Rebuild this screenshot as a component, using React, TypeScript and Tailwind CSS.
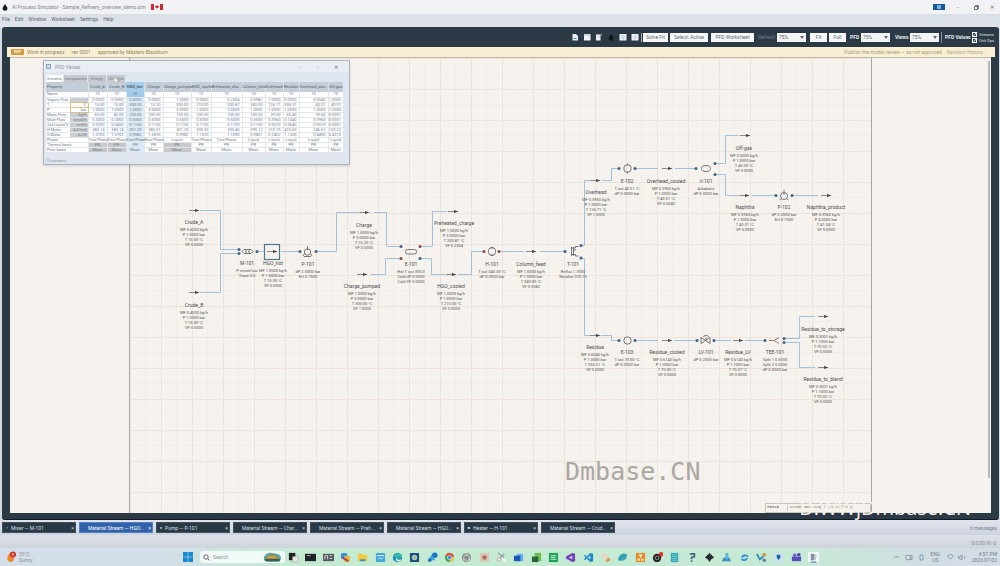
import React from "react";

const ORIGIN_X = 130;
const ORIGIN_Y = 58;

type NodeInfo = { name: string; x: number; y: number; lines: string[] };

const nodes: NodeInfo[] = [
  { name: "Crude_A", x: 194, y: 222, lines: ["MF 0.6000 kg/h", "P 1.0000 bar", "T 15.00 °C", "VF 0.0000"] },
  { name: "Crude_B", x: 194, y: 305, lines: ["MF 0.4000 kg/h", "P 1.0000 bar", "T 15.00 °C", "VF 0.0000"] },
  { name: "M-101", x: 247, y: 263, lines: ["P mixed low", "Trace 0.0"] },
  { name: "HGO_hot", x: 273, y: 263, lines: ["MF 1.0000 kg/h", "P 1.0000 bar", "T 15.00 °C", "VF 0.0000"] },
  { name: "P-101", x: 308, y: 264, lines: ["dP 2.0000 bar", "Eff 0.7500"] },
  { name: "Charge", x: 364, y: 225, lines: ["MF 1.0000 kg/h", "P 3.0000 bar", "T 15.20 °C", "VF 0.0000"] },
  { name: "Charge_pumped", x: 362, y: 286, lines: ["MF 1.0000 kg/h", "P 3.0000 bar", "T 300.00 °C", "VF 1.0000"] },
  { name: "E-101", x: 411, y: 264, lines: ["Hot T out 300.0", "Cold dP 0.0000", "Cold VF 0.0000"] },
  { name: "Preheated_charge", x: 454, y: 223, lines: ["MF 1.0000 kg/h", "P 3.0000 bar", "T 200.87 °C", "VF 0.2304"] },
  { name: "HGO_cooled", x: 451, y: 286, lines: ["MF 1.0000 kg/h", "P 1.0000 bar", "T 210.00 °C", "VF 0.0000"] },
  { name: "H-101", x: 492, y: 264, lines: ["T out 340.00 °C", "dP 0.0000 bar"] },
  { name: "Column_feed", x: 531, y: 264, lines: ["MF 1.0000 kg/h", "P 1.0000 bar", "T 340.00 °C", "VF 0.5982"] },
  { name: "T-101", x: 573, y: 264, lines: ["Reflux 1.7000", "Residue 370.75"] },
  { name: "Overhead", x: 596, y: 192, lines: ["MF 0.3960 kg/h", "P 1.0000 bar", "T 126.71 °C", "VF 1.0000"] },
  { name: "E-102", x: 627, y: 181, lines: ["T out 40.01 °C", "dP 0.0000 bar"] },
  { name: "Overhead_cooled", x: 666, y: 181, lines: ["MF 0.3960 kg/h", "P 1.0000 bar", "T 40.01 °C", "VF 0.0040"] },
  { name: "V-101", x: 706, y: 181, lines: ["Adiabatic", "dP 0.0000 bar"] },
  { name: "Off-gas", x: 744, y: 148, lines: ["MF 0.0000 kg/h", "P 1.0000 bar", "T 40.00 °C", "VF 0.0000"] },
  { name: "Naphtha", x: 745, y: 207, lines: ["MF 0.3960 kg/h", "P 1.0000 bar", "T 40.01 °C", "VF 0.0000"] },
  { name: "P-102", x: 784, y: 207, lines: ["dP 3.0000 bar", "Eff 0.7500"] },
  { name: "Naphtha_product", x: 826, y: 207, lines: ["MF 0.3960 kg/h", "P 4.0000 bar", "T 41.04 °C", "VF 0.0000"] },
  { name: "Residue", x: 595, y: 347, lines: ["MF 0.6040 kg/h", "P 1.0000 bar", "T 355.31 °C", "VF 0.0000"] },
  { name: "E-103", x: 627, y: 352, lines: ["T out 70.00 °C", "dP 0.0000 bar"] },
  { name: "Residue_cooled", x: 667, y: 352, lines: ["MF 0.6140 kg/h", "P 1.0000 bar", "T 70.00 °C", "VF 0.0000"] },
  { name: "LV-101", x: 706, y: 352, lines: ["dP 0.2000 bar"] },
  { name: "Residue_LV", x: 738, y: 352, lines: ["MF 0.6140 kg/h", "P 1.1000 bar", "T 70.07 °C", "VF 0.0000"] },
  { name: "TEE-101", x: 775, y: 352, lines: ["Split 1 0.5000", "Split 2 0.5000", "dP 0.0000 bar"] },
  { name: "Residue_to_storage", x: 823, y: 329, lines: ["MF 0.3001 kg/h", "P 1.1000 bar", "T 70.02 °C", "VF 0.0000"] },
  { name: "Residue_to_blend", x: 823, y: 379, lines: ["MF 0.3001 kg/h", "P 1.1000 bar", "T 70.02 °C", "VF 0.0000"] },
];

const wires = [
  "M200 210.5H220.5V249.5H239", "M200 292.5H220.500V253.5H239", "M257 251.5H264", "M281 251.5H299", "M316 251.5H336.5V212.5H358",
  "M374 212.5H386.5V246.5H401", "M420 246.5H432.5V211.5H447", "M371 274.5H385.5V258.5H401", "M420 258.5H431.5V274.5H445", "M458 274.5H471.5V251.5H484",
  "M499 251.5H524", "M540 251.5H565", "M581 245.5H584.5V180.5H590", "M602 180.5H611.5V168.5H619", "M635 168.5H658",
  "M675 168.5H696", "M715 163.5H725.5V135.5H739", "M715 174.5H725.5V195.5H738", "M752 195.5H775", "M792 195.5H818",
  "M581 258.5H584.5V335.5H590", "M601 335.5H611.5V340.5H619", "M635 340.5H658", "M674 340.5H697", "M714 340.5H731",
  "M745 340.5H765", "M784 338.5H799.5V316.5H815", "M784 342.5H799.500V367.5H815",
];

const arrows: [number, number][] = [
  [189, 210.5], [189, 292.5], [267, 251.5], [359, 212.5], [357, 274.5], [448, 211.5], [446, 274.5], [526, 251.5], [590, 180.5],
  [662, 168.5], [740, 135.5], [739, 195.5], [821, 195.5], [590, 335.5], [662, 340.5], [733, 340.5], [818, 316.5], [818, 367.5],
];

const bluePorts: [number, number][] = [
  [239, 249.5], [239, 253.5], [257, 251.5], [300, 251.5], [316, 251.5], [401, 246.5], [420, 258.5], [565, 251.5], [581, 245.5], [581, 258],
  [619, 168.5], [635, 168.5], [696, 168.5], [715, 163.5], [715, 174.5], [776, 195.5], [792, 195.5], [619, 340.5], [635, 340.5],
  [697, 340.5], [714, 340.5], [765, 340.5], [784, 338.5], [784, 342.5],
];
const redPorts: [number, number][] = [[420, 246.5], [401, 258.5], [484, 251.5], [499, 251.5]];

function Flowsheet() {
  return (
    <svg className="absolute left-0 top-0" width="741" height="455" viewBox="130 58 741 455" fill="none" aria-hidden="true">
      <g stroke="#9fc3df" strokeWidth="1">
        {wires.map((d) => <path key={d} d={d} />)}
      </g>
      {arrows.map(([x, y]) => (
        <g key={`${x}-${y}`}>
          <path d={`M${x} ${y}h8`} stroke="#8a8a88" strokeWidth="1" />
          <path d={`M${x + 6} ${y - 1.5}l4.500 1.500l-4.500 1.500z`} fill="#444" />
        </g>
      ))}
      <rect x="264.500" y="244.500" width="15" height="15" stroke="#4d7896" strokeWidth="1.200" />
      <g stroke="#66696c" strokeWidth="0.900">
        <path d="M244 249.500h7l2 2l-2 2h-7l-2-2zM246 249.500v4M249 249.500v4" />
        <circle cx="307.500" cy="252" r="3.200" /><path d="M307.500 246v4M304 256.500h7M304.500 253.500l-1.500 2.500M310.500 253.500l1.500 2.500" />
        <rect x="405.500" y="249.500" width="11" height="4.500" rx="2" />
        <rect x="488.500" y="248" width="7" height="7" rx="2.500" /><path d="M490.500 247.500h3M490.500 255.500h3" />
        <path d="M571.500 247v9M573.500 247v9M571.500 248h4v-1.500h3M571.500 254.500h4v1.500h3M574 250h2" />
        <rect x="624" y="165" width="7" height="7" rx="2.500" /><path d="M627.500 163.500v2M627.500 171.500v2" />
        <ellipse cx="706" cy="168.500" rx="4.500" ry="3" />
        <circle cx="784" cy="196" r="3.500" /><path d="M784 190v5M781 199l-1.500 1M787 199l1.500 1" />
        <circle cx="627.500" cy="340.500" r="3.700" />
        <path d="M701 337.500l9 6v-6l-9 6zM706 340.500v-3M703.500 337c0-2 5-2 5 0" />
        <path d="M774 340.500l5-3" />
      </g>
      <path d="M769 340.500h5l5 3" stroke="#b06a5c" strokeWidth="0.900" />
      {bluePorts.map(([x, y]) => <circle key={`b${x}-${y}`} cx={x} cy={y} r="1.500" fill="#3f6588" />)}
      {redPorts.map(([x, y]) => <circle key={`r${x}-${y}`} cx={x} cy={y} r="1.500" fill="#8c4a48" />)}
    </svg>
  );
}

const columns = ["Crude_A", "Crude_B", "HGO_hot", "Charge", "Charge_pumped", "HGO_cooled", "Preheated_cha...", "Column_feed", "Overhead", "Residue", "Overhead_coo...", "Off-gas"];

const rows: { label: string; unit?: string; values: string[] }[] = [
  { label: "Name", values: ["10", "10", "10", "10", "10", "10", "10", "10", "10", "10", "10", "10"] },
  { label: "Vapour Frac.", unit: "-", values: ["0.0000", "0.0000", "0.0000", "0.0000", "1.0000", "0.0000", "0.2304", "0.5982", "1.0000", "0.0000", "0.0040", "1.0000"] },
  { label: "T", unit: "°C", values: ["15.00", "15.00", "300.00", "15.20", "300.00", "210.00", "200.87", "340.00", "126.71", "355.31", "40.01", "40.01"] },
  { label: "P", unit: "bar", values: ["1.0000", "1.0000", "1.0000", "3.0000", "3.0000", "1.0000", "3.0000", "1.0000", "1.0000", "1.0000", "1.0000", "1.0000"] },
  { label: "Mass Flow", unit: "kg/h", values: ["60.00", "40.00", "100.00", "100.00", "100.00", "100.00", "100.00", "100.00", "39.60", "60.40", "39.60", "0.0001"] },
  { label: "Mole Flow", unit: "kmol/h", values: ["0.3000", "0.2000", "0.5000", "0.5000", "0.5000", "0.5000", "0.5000", "0.5000", "0.3960", "0.1040", "0.3960", "0.0001"] },
  { label: "Std Liquid V.", unit: "m3/h", values: ["0.0700", "0.0450", "0.1150", "0.1150", "0.1150", "0.1150", "0.1150", "0.1150", "0.0510", "0.0640", "0.0510", "0.0001"] },
  { label: "H Molar", unit: "kJ/mol", values: ["383.14", "383.14", "301.20", "383.01", "301.20", "330.50", "333.40", "290.12", "210.10", "410.60", "246.61", "120.22"] },
  { label: "S Molar", unit: "kJ/K", values: ["1.3703", "1.3703", "0.9982", "1.3690", "0.9982", "1.1020", "1.1090", "0.9801", "0.7402", "1.1250", "0.8490", "0.4310"] },
  { label: "Phase", values: ["Two-Phase", "Two-Phase", "Two-Phase", "Two-Phase", "Liquid", "Two-Phase", "Two-Phase", "Liquid", "Liquid", "Liquid", "Liquid", "Liquid"] },
  { label: "Thermo basis", values: ["PR", "PR", "PR", "PR", "PR", "PR", "PR", "PR", "PR", "PR", "PR", "PR"] },
  { label: "Flow basis", values: ["Mass", "Mass", "Mass", "Mass", "Mass", "Mass", "Mass", "Mass", "Mass", "Mass", "Mass", "Mass"] },
];

function ValuesWindow() {
  return (
    <section aria-label="PFD Values" className="absolute left-[33px] top-[2px] flex w-[307px] flex-col border border-[#aab3bf] bg-[#dfe6ef] text-[#737b85] shadow-sm">
      <header className="flex h-[11px] items-center bg-[#e9edf4] pl-[2px] pr-1 text-[5px] leading-[6px] text-[#8d95a1]">
        <span className="mr-1 h-[5px] w-[5px] border border-[#8ba4bd] bg-[#c9dbea]" />
        <span className="flex-1">PFD Values</span>
        <button aria-label="Minimize" className="w-[18px]">–</button>
        <button aria-label="Maximize" className="w-[18px]">▫</button>
        <button aria-label="Close" className="w-[18px] text-[#555]">✕</button>
      </header>
      <nav className="mt-px flex h-[9px] gap-px pl-[2px] pt-[2px] text-[4px] leading-[6px]">
        <button className="w-[17px] bg-white">Streams</button>
        <button className="w-[23px] bg-[#c6c9ce]">Composition</button>
        <button className="w-[18px] bg-[#c6c9ce]">Energy</button>
        <button className="relative w-[18px] bg-[#c6c9ce]">Unit Ops
          <svg className="absolute left-[7px] top-[2px]" width="5" height="7" viewBox="0 0 5 7" aria-hidden="true"><path d="M0 0v6l1.500-1.500L3 7l1-.6L3 4h2z" fill="#fff" stroke="#777" strokeWidth=".4" /></svg>
        </button>
      </nav>
      <table className="ml-[2px] w-[297px] table-fixed border-collapse text-[4px] leading-[4px]">
        <colgroup>
          <col className="w-[24px]" /><col className="w-[18px]" /><col className="w-[19px]" /><col className="w-[19px]" /><col className="w-[18px]" />
          <col className="w-[19px]" /><col className="w-[28px]" /><col className="w-[20px]" /><col className="w-[31px]" /><col className="w-[23px]" />
          <col className="w-[18px]" /><col className="w-[16px]" /><col className="w-[29px]" /><col className="w-[15px]" />
        </colgroup>
        <thead>
          <tr className="h-[10px] bg-[#c3ced9] text-[#56606a]">
            <th colSpan={2} className="p-0 pl-px text-left font-normal">Property</th>
            {columns.map((c) => (
              <th key={c} className={c === "HGO_hot" ? "whitespace-nowrap bg-[#a5cdec] p-0 text-center font-bold" : "whitespace-nowrap border-l border-[#d7dee6] p-0 text-center font-normal"}>{c}</th>
            ))}
          </tr>
        </thead>
        <tbody>
          {rows.map((r, i) => (
            <tr key={r.label} className="h-[5px] border-b border-[#e3e7eb] bg-white">
              <th scope="row" colSpan={r.unit ? 1 : 2} className="whitespace-nowrap p-0 pl-px text-left font-normal">{r.label}</th>
              {r.unit && (
                <td className={i === 2 || i === 3 ? "border border-[#e2be82] p-0" : "bg-[#c9ccd1] p-0"}>
                  <select aria-label={`${r.label} unit`} className="block h-[4px] w-full appearance-none bg-transparent pr-px text-right text-[4px] leading-[4px]">
                    <option>{r.unit}</option>
                  </select>
                </td>
              )}
              {r.values.map((v, j) => {
                const gray = i >= 10 && (j < 2 || j === 4);
                const align = i >= 9 || i === 0 ? "text-center" : "pr-[2px] text-right";
                const fill = j === 2 ? (i === 0 ? "bg-[#9fc8ea]" : "bg-[#d9ebf8]") : gray ? "bg-[#c6c8cc]" : "";
                const ink = i > 1 && i < 9 && (j < 2 || j === 6) ? "text-[#6477ad]" : "";
                return <td key={j} className={`whitespace-nowrap border-l border-[#e3e7eb] p-0 ${align} ${fill} ${ink}`}>{v}</td>;
              })}
            </tr>
          ))}
        </tbody>
      </table>
      <footer className="mt-[5px] pl-[2px] text-[4px] leading-[6px] text-[#8a93a0]">15 streams</footer>
    </section>
  );
}

function DarkSelect({ label, value }: { label: string; value: string }) {
  return (
    <span className="relative flex">
      <select aria-label={label} className="h-[9px] w-[29px] appearance-none bg-[#f3f4f6] pl-[2px] text-[5px] leading-[7px] text-[#666]">
        <option>{value}</option>
      </select>
      <svg className="pointer-events-none absolute right-[2px] top-[3px]" width="4" height="3" viewBox="0 0 4 3" aria-hidden="true"><path d="M0 0h4L2 3z" fill="#666" /></svg>
    </span>
  );
}

function ToolIcon({ kind }: { kind: string }) {
  return (
    <svg width="8" height="8" viewBox="0 0 8 8" aria-hidden="true">
      {kind === "new" && <path d="M1.500 1h3.500l2 2V7.500H1.500z" fill="#e8edf2" />}
      {kind === "new" && <path d="M2.500 5.500h3" stroke="#5a88b5" />}
      {kind === "open" && <path d="M1 1h6.500v6.500H1z" fill="#f0f3f6" />}
      {kind === "open" && <path d="M1 2h6" stroke="#9fb8cf" />}
      {kind === "edit" && <path d="M1 1.500h4.500v6H1z" fill="#eef1f5" />}
      {kind === "edit" && <path d="M3.500 4.500L7 1" stroke="#b5c1ce" />}
      {kind === "drop" && <path d="M4 .5C5 3 6.500 4 6.500 5.500a2.500 2.300 0 01-5 0C1.500 4 3 3 4 .5z" fill="#10161b" />}
      {kind === "grid" && <path d="M.5 1h7v6.500h-7z" fill="#f0f3f8" />}
      {kind === "grid" && <path d="M.5 3h7M4 3v4.500M2 5h4" stroke="#b3c4da" strokeWidth=".6" />}
    </svg>
  );
}

const tabs: [string, string][] = [
  ["▫", "Mixer — M-101"], ["", "Material Stream — HGO..."], ["●", "Pump — P-101"], ["", "Material Stream — Char..."],
  ["", "Material Stream — Preh..."], ["", "Material Stream — HGO..."], ["■", "Heater — H-101"], ["", "Material Stream — Crud..."],
];

const appIcons: { name: string; art: React.ReactNode }[] = [
  { name: "Task view", art: <><path d="M1 1h7v8H1z" fill="#222" /><path d="M5 5h6v6H5z" fill="#e7e7e7" stroke="#999" strokeWidth=".5" /></> },
  { name: "Terminal", art: <><path d="M0 2h12v8H0z" fill="#20242a" /><path d="M2 4h4" stroke="#bbb" /></> },
  { name: "Command prompt", art: <><path d="M0 2h12v8H0z" fill="#555b60" /><path d="M2 8V4h3v4M7 4h3M7 7h3" stroke="#ddd" fill="none" /></> },
  { name: "Paint", art: <><rect x="1" y="1" width="7" height="7" rx="2" fill="#368de0" /><rect x="4" y="4" width="7" height="7" rx="2" fill="#e7b73a" /><path d="M3 6l6 4" stroke="#a13c68" strokeWidth="2" /></> },
  { name: "Files", art: <><path d="M1 2h4l1 1h5v7H1z" fill="#f3c63b" /><path d="M3 8h6v2H3z" fill="#318dd5" /></> },
  { name: "Store", art: <><rect x="1" y="1" width="10" height="10" rx="1" fill="#43a5d8" /><path d="M2 4h8M3 8c3-4 4 2 6-2" stroke="#dff3ff" fill="none" /></> },
  { name: "Edge", art: <><circle cx="6" cy="6" r="5" fill="#1686cf" /><path d="M1 5c1-5 10-4 10 1H5c0 3 3 3 5 2" fill="#38bd9e" /><path d="M5 6c0 3 3 3 5 2l-1 2c-4 1-6-1-4-4z" fill="#d5f1f2" /></> },
  { name: "Photos", art: <><rect x="1" y="1" width="10" height="10" rx="1" fill="#204d77" /><circle cx="6" cy="6" r="3" fill="#8ed0e8" /><circle cx="6" cy="6" r="1.500" fill="#e0a747" /></> },
  { name: "Cloud", art: <><circle cx="8.500" cy="3.500" r="3" fill="#1672c2" /><path d="M1 9l4-6 4 6z" fill="#3b9ee8" /><circle cx="3" cy="9" r="2" fill="#2475c4" /></> },
  { name: "Chrome", art: <><circle cx="6" cy="6" r="5" fill="#e9bd32" /><path d="M6 6L1.700 3.500A5 5 0 0111 5z" fill="#dc4b3e" /><path d="M6 6L1.700 3.500A5 5 0 006 11z" fill="#37a75c" /><circle cx="6" cy="6" r="2.300" fill="#3f83dd" stroke="#fff" strokeWidth=".6" /></> },
  { name: "Assistant", art: <><circle cx="6" cy="6" r="5" fill="#858b88" /><path d="M4 2l5 3v4M8 2L3 5v4M3 8l5 2 2-4" stroke="#dfe8e2" strokeWidth=".8" fill="none" /></> },
  { name: "Record", art: <><rect x="1" y="1" width="10" height="10" rx="1" fill="#d7c9b9" /><circle cx="6" cy="6" r="2.500" fill="#b76c5b" /></> },
  { name: "Snip", art: <><path d="M2 1l7 5M9 2L4 7" stroke="#9b8fa2" strokeWidth="1.200" /><circle cx="3" cy="8" r="2" fill="#eee" stroke="#c1a2a2" /><circle cx="9" cy="9" r="2" fill="#f1f1f1" /></> },
  { name: "Word", art: <><path d="M4 2h7v8H4z" fill="#66aaf0" /><path d="M1 4h7v6H1z" fill="#1a57b5" /></> },
  { name: "Excel", art: <><path d="M4 1h7v9H4z" fill="#6fbd52" /><path d="M1 5h7v6H1z" fill="#276838" /></> },
  { name: "Sheets", art: <><path d="M1 1h10v10H1z" fill="#21a25a" /><path d="M3 4h6M3 6h5M3 8h6" stroke="#d1f4dd" /></> },
  { name: "Visual Studio", art: <><path d="M8 1l3 1v8l-3 1-7-4V5z" fill="#7244b7" /><path d="M8 4L4 6l4 2z" fill="#d9c8f0" /></> },
  { name: "VS Code", art: <><path d="M8 1l3 1v8l-3 1-4-4-2 2-1-1 2-2-2-2 1-1 2 2z" fill="#1e88ce" /><path d="M8 4L5 6l3 2z" fill="#d4edf5" /></> },
  { name: "Draw", art: <><path d="M1 3l4-2 5 5-4 3z" fill="#e8d5bb" /><path d="M6 9l4-3 1 3-3 2z" fill="#d68e43" /></> },
  { name: "Browser", art: <><path d="M1 9C2 2 7 0 11 3c0 5-4 8-10 6z" fill="#3ca8b7" /><path d="M3 9c1-3 3-5 6-6" stroke="#23779a" fill="none" /></> },
  { name: "Diagrams", art: <><path d="M1 1h10v10H1z" fill="#e88a25" /><path d="M6 4v2M3.500 8.500L6 6l2.500 2.500" stroke="#fff0d8" fill="none" /><path d="M4.500 2.500h3v2h-3zM2.500 7.500h2.500v2H2.500zM7 7.500h2.500v2H7z" fill="#fff0d8" /></> },
  { name: "Recorder", art: <><circle cx="5.500" cy="6.500" r="4.500" fill="#232323" /><circle cx="5.500" cy="6.500" r="2" stroke="#999" fill="none" /><circle cx="10" cy="2.500" r="2.500" fill="#e0322e" /></> },
  { name: "Notes", art: <><path d="M2 1h8v10H2z" fill="#2ba4b4" /><path d="M3 3h6M3 5h6M3 7h6M3 9h6" stroke="#b8edef" strokeWidth=".6" /></> },
  { name: "Python", art: <><path d="M3 2h5v3L5 6v2" stroke="#4b6580" strokeWidth="2" fill="none" /><circle cx="5" cy="10" r="1" fill="#4b6580" /></> },
  { name: "Inkscape", art: <path d="M6 1l5 5-3 2-2 3-2-3-3-2z" fill="#25282c" /> },
  { name: "Azure", art: <><path d="M1 10h10L9 6H3z" fill="#348dbb" /><path d="M5 1h3v7H5z" fill="#5fb5d9" /></> },
  { name: "Sync", art: <><circle cx="6" cy="6" r="4" fill="#a9d6e8" /><path d="M3 6c2-4 6-2 7-1M9 7c-2 3-5 2-6 1" stroke="#1b7fc0" strokeWidth="1.500" fill="none" /></> },
  { name: "Tools", art: <><path d="M1 2l3 6 4-3" stroke="#2e8eb5" strokeWidth="2" fill="none" /><circle cx="9" cy="3" r="2" fill="#dc8c38" /><circle cx="9" cy="9" r="2" fill="#6380a0" /></> },
  { name: "Installer", art: <><path d="M1 1h10v10H1z" fill="#cce3ec" /><path d="M4 3h4v3L6 9 4 6z" fill="#1b66ad" /></> },
  { name: "Teams", art: <><path d="M1 5h10v5H1z" fill="#574dbb" /><circle cx="4" cy="3.500" r="2" fill="#6f66cf" /><circle cx="8.500" cy="3" r="2" fill="#5148ae" /></> },
  { name: "Simulator", art: <><path d="M0 0h12v11H0z" fill="#f4f7f9" /><path d="M3 2h4v7H3z" fill="#82939d" /><path d="M7 3l2 1-1 4" stroke="#82939d" strokeWidth=".8" fill="none" /><path d="M3 11h6" stroke="#315fa8" /></> },
];

export default function App() {
  return (
    <div className="flex min-h-screen w-full flex-col bg-[#d5dbe5] font-[Roboto,sans-serif] text-[5px] leading-[6px] text-[#5d656e]">
      <header className="flex h-[14px] items-center bg-[#f1f1f6] pl-[2px] pr-1 text-[#83868d]">
        <svg width="6" height="8" viewBox="0 0 6 8" aria-hidden="true"><path d="M3 1c1 2 2.500 3 2.500 4.500a2.500 2.300 0 01-5 0C.5 4 2 3 3 1z" fill="#15191d" /></svg>
        <h1 className="ml-1 min-w-[126px] whitespace-nowrap font-normal">AI Process Simulator - Sample_Refinery_overview_demo.sim</h1>
        <svg className="ml-[5px] shrink-0" width="12" height="6" viewBox="0 0 12 6" aria-label="Canada"><path d="M0 0h12v6H0z" fill="#fff" /><path d="M0 0h3v6H0zM9 0h3v6H9zM6 1l1 1 1-.2-.5 1.700L6 4.500l-1.500-1L4 1.800 5 2z" fill="#d5242c" /></svg>
        <span className="flex-1" />
        <span className="mr-[7px] flex h-[6px] w-[12px] items-center justify-center bg-[#17569a]"><span className="h-[4px] w-[4px] bg-[#82b3d7]" /></span>
        <button aria-label="Minimize" className="w-[12px]">–</button>
        <button aria-label="Restore" className="ml-[6px] flex w-[12px] justify-center"><svg width="5" height="5" viewBox="0 0 5 5" fill="none" stroke="#555" strokeWidth=".8" aria-hidden="true"><path d="M.5 1.500h3v3h-3zM1.500 1.500v-1h3v3h-1" /></svg></button>
        <button aria-label="Close" className="ml-[6px] w-[8px] text-[#555]">✕</button>
      </header>

      <nav className="flex h-[13px] items-center gap-[5px] bg-gradient-to-b from-[#d9e0e7] to-[#e0e4eb] pb-[3px] pl-[2px]">
        <button>File</button><button>Edit</button><button>Window</button><button>Worksheet</button><button>Settings</button><button>Help</button>
      </nav>

      <main className="ml-[2px] mr-px flex flex-1 flex-col rounded-[3px] border-b border-[#101a22] bg-[#2c3a46] pb-[6px]">
        <div className="flex h-5 items-center justify-end pr-[5px] text-[#646b73]">
          <div className="flex items-center gap-1">
            {["new", "open", "edit", "drop", "grid", "grid"].map((k, i) => (
              <button key={i} aria-label={`${k} ${i + 1}`}><ToolIcon kind={k} /></button>
            ))}
          </div>
          <span className="ml-[2px] mr-px h-[9px] w-px bg-[#a8b0b8]" />
          <button className="h-[9px] w-[25px] whitespace-nowrap bg-[#f7f8fa]">Solve Fit</button>
          <button className="ml-[2px] h-[9px] w-[38px] whitespace-nowrap bg-[#f7f8fa]">Select: Active</button>
          <button className="ml-[3px] h-[9px] w-[43px] whitespace-nowrap bg-[#f7f8fa]">PFD Worksheet</button>
          <span className="ml-1 w-[19px] text-[#6d7b88]">Refresh</span>
          <DarkSelect label="Refresh" value="75%" />
          <button className="ml-1 h-[9px] w-[17px] bg-[#f7f8fa]">Fit</button>
          <button className="ml-[2px] h-[9px] w-[17px] bg-[#f7f8fa]">Full</button>
          <span className="ml-1 w-[11px] font-bold text-[#e8ecef]">PFD</span>
          <DarkSelect label="PFD zoom" value="75%" />
          <span className="ml-[5px] w-[15px] font-bold text-[#e8ecef]">Views</span>
          <DarkSelect label="Views zoom" value="75%" />
          <span className="ml-[2px] mr-[3px] h-[11px] w-px bg-[#8995a0]" />
          <span className="w-[27px] whitespace-nowrap font-bold text-[#e8ecef]">PFD Values</span>
          <div className="flex w-[22px] flex-col gap-px text-[4px] leading-[5px] text-[#dfe4e8]">
            {["Streams", "Unit Ops"].map((l) => (
              <label key={l} className="flex items-center gap-[2px] whitespace-nowrap">
                <span className="relative flex">
                  <input type="checkbox" defaultChecked className="h-[5px] w-[5px] appearance-none border border-white bg-[#2c3a46]" />
                  <svg className="pointer-events-none absolute left-px top-px" width="3" height="3" viewBox="0 0 3 3" aria-hidden="true"><path d="M0 1.500l1 1L3 0" stroke="#fff" strokeWidth=".8" fill="none" /></svg>
                </span>
                {l}
              </label>
            ))}
          </div>
        </div>

        <div className="ml-[5px] mr-[4px] flex h-[10px] items-center whitespace-nowrap bg-[#faefd3] px-1 text-[#90845f]">
          <span className="h-[6px] w-[13px] rounded-[1px] bg-[#cd9c45] text-center text-[4px] font-bold text-[#fff2d5]">WIP</span>
          <span className="ml-[3px]">Work in progress</span>
          <span className="ml-[7px]">rev 0001</span>
          <span className="ml-[7px]">approved by Mastero Blackburn</span>
          <span className="flex-1" />
          <span className="text-[#a99d7e]">Publish the model review — as not approved</span>
          <a href="#history" className="ml-[5px] mr-[3px] text-[#b3a789]">Revision History ...</a>
        </div>

        <div className="relative mx-2 flex flex-1 justify-center overflow-hidden border-t border-[#bdb9ae] bg-[#f6f2ed]">
          <div className="relative w-[743px] shrink-0 border-x border-[#a9a8a6] bg-[#f6f2ed] bg-[linear-gradient(to_right,#eee2dd_1px,transparent_1px),linear-gradient(to_bottom,#eee2dd_1px,transparent_1px),linear-gradient(to_right,transparent_15px,#f3ede8_15px,#f3ede8_16px,transparent_16px),linear-gradient(to_bottom,transparent_15px,#f3ede8_15px,#f3ede8_16px,transparent_16px)] bg-size-[31px_31px]">
            <Flowsheet />
            {nodes.map((n) => (
              <div key={n.name} className="absolute flex w-0 flex-col items-center whitespace-nowrap" style={{ left: n.x - ORIGIN_X, top: n.y - ORIGIN_Y - 3 }}>
                <span className="text-[5px] leading-[6px] text-[#4d4d4d]">{n.name}</span>
                <span className="mt-[2px] flex flex-col items-center text-[4px] leading-[5px] text-[#555]">
                  {n.lines.map((l) => <span key={l}>{l}</span>)}
                </span>
              </div>
            ))}
            <div className="absolute bottom-0 right-0 flex h-[10px] w-[106px] items-start border border-[#c9c4bd] bg-[#f5f1eb] font-['Liberation_Mono',monospace] text-[4px] leading-[7px] text-[#77736e]">
              <span className="w-[22px] border-r border-[#d5d0c9] pl-px font-bold">TITLE</span>
              <span className="whitespace-nowrap pl-[2px]">Crude Heating / Distillery</span>
            </div>
            <p className="absolute bottom-[26px] left-[435px] font-['DejaVu_Sans_Mono',monospace] text-[25px] leading-[30px] text-[#aaa7a3]">Dmbase.CN</p>
          </div>
          <span className="absolute right-px top-[3px] h-[417px] w-[2px] bg-[#b8b7b5]" />
          <ValuesWindow />
        </div>
        <div className="relative h-0">
          <p className="absolute bottom-[-7px] right-[28px] whitespace-nowrap font-['Open_Sans',sans-serif] text-[20px] leading-[24px] text-[#f6f2ed]">D.WWjDmbase.CN</p>
        </div>
      </main>

      <div className="flex h-[15px] items-center gap-[3px] bg-gradient-to-b from-[#e0e4ec] to-[#cdd3df] pl-[2px] pr-[3px]">
        {tabs.map(([mark, name], i) => (
          <div key={i} className={i === 1 ? "flex h-[11px] w-[74px] items-center border border-[#5582bd] bg-[#2f62a8] text-white" : "flex h-[11px] w-[74px] items-center border border-[#40505d] bg-[#293946] text-[#d9dfe4]"}>
            <span className="w-[8px] text-center text-[4px]">{mark}</span>
            <button className="flex-1 whitespace-nowrap text-left">{name}</button>
            <button aria-label={`Close ${name}`} className="w-[5px]">×</button>
          </div>
        ))}
        <span className="flex-1" />
        <span className="text-[#7c7e9b]">6 messages</span>
      </div>

      <div className="flex h-[13px] items-center justify-end bg-gradient-to-b from-[#dce1ea] to-[#cfd3da] pr-1 pt-[3px] text-[#868b94]">0:0:00 W: 0</div>

      <footer className="flex h-[18px] items-center bg-[linear-gradient(to_right,#d4deeb_15%,#c4ebd2_30%,#c6e9d5_80%,#d3dce7_95%)]">
        <div className="flex w-[183px] items-center gap-[3px] pl-[6px] text-[#8b939c]">
          <svg width="10" height="12" viewBox="0 0 10 12" aria-hidden="true"><path d="M5 1c4 2 4 10 0 10S-1 6 5 1z" fill="#ea8a2b" /><circle cx="7" cy="3.500" r="3" fill="#c93428" /><path d="M7 2v3" stroke="#fff" strokeWidth=".8" /></svg>
          <span className="flex flex-col"><span>35°C</span><span>Sunny</span></span>
        </div>
        <button aria-label="Start" className="w-[17px]">
          <svg width="10" height="10" viewBox="0 0 10 10" aria-hidden="true"><path d="M0 0h4.700v4.700H0zM5.300 0H10v4.700H5.300zM0 5.300h4.700V10H0zM5.300 5.300H10V10H5.300z" fill="#1689d3" /></svg>
        </button>
        <div className="flex h-[12px] w-[85px] items-center rounded-[3px] bg-[#f1faf7] pl-[3px]">
          <svg width="7" height="7" viewBox="0 0 7 7" fill="none" stroke="#676085" aria-hidden="true"><circle cx="3" cy="3" r="2.200" /><path d="M4.700 4.700L6.500 6.500" /></svg>
          <input aria-label="Search" placeholder="Search" className="ml-[3px] h-[10px] w-[50px] bg-transparent text-[5px] leading-[6px] placeholder:text-[#8e999c]" />
          <svg width="19" height="10" viewBox="0 0 19 10" aria-hidden="true"><path d="M1 8C0 3 5 0 9 1s9 0 9 6l-2 3H4z" fill="#5aa49d" /><path d="M3 5l6-3 6 3v4H3z" fill="#a88743" /><path d="M2 7h15v2H2z" fill="#465d50" /><path d="M5 5h8" stroke="#e0c57d" /></svg>
        </div>
        <div className="grid w-[537px] grid-cols-[repeat(31,minmax(0,1fr))]">
          {appIcons.map((a) => (
            <button key={a.name} aria-label={a.name} className="flex justify-center">
              <svg width="11" height="11" viewBox="0 0 12 12" aria-hidden="true">{a.art}</svg>
            </button>
          ))}
        </div>
        <span className="flex-1" />
        <div className="flex items-center gap-[6px] pr-[3px] text-[#737d86]">
          <svg width="5" height="4" viewBox="0 0 5 4" fill="none" stroke="#7c8891" aria-hidden="true"><path d="M.5 3l2-2 2 2" /></svg>
          <svg width="8" height="7" viewBox="0 0 8 7" fill="none" stroke="#8c99a2" aria-hidden="true"><circle cx="3" cy="3.500" r="2.500" /><path d="M5 1.500h2v4H5" /></svg>
          <svg width="5" height="7" viewBox="0 0 5 7" fill="none" stroke="#7fa0b8" aria-hidden="true"><path d="M1 1h3v5H1z" /></svg>
          <span className="flex w-[11px] flex-col text-center"><span>ENG</span><span>US</span></span>
          <svg width="7" height="6" viewBox="0 0 7 6" fill="none" stroke="#8c99a2" aria-hidden="true"><path d="M.5 2c2-2 4-2 6 0l-3 3z" /></svg>
          <svg className="-ml-[2px]" width="8" height="7" viewBox="0 0 8 7" fill="none" stroke="#8c99a2" aria-hidden="true"><path d="M.5 2.500h1.500L4 1v5L2 4.500H.5zM6 2c1 1 1 2 0 3" /></svg>
          <span className="flex flex-col whitespace-nowrap text-right"><span>4:51 PM</span><span>2026-07-02</span></span>
        </div>
      </footer>
    </div>
  );
}
